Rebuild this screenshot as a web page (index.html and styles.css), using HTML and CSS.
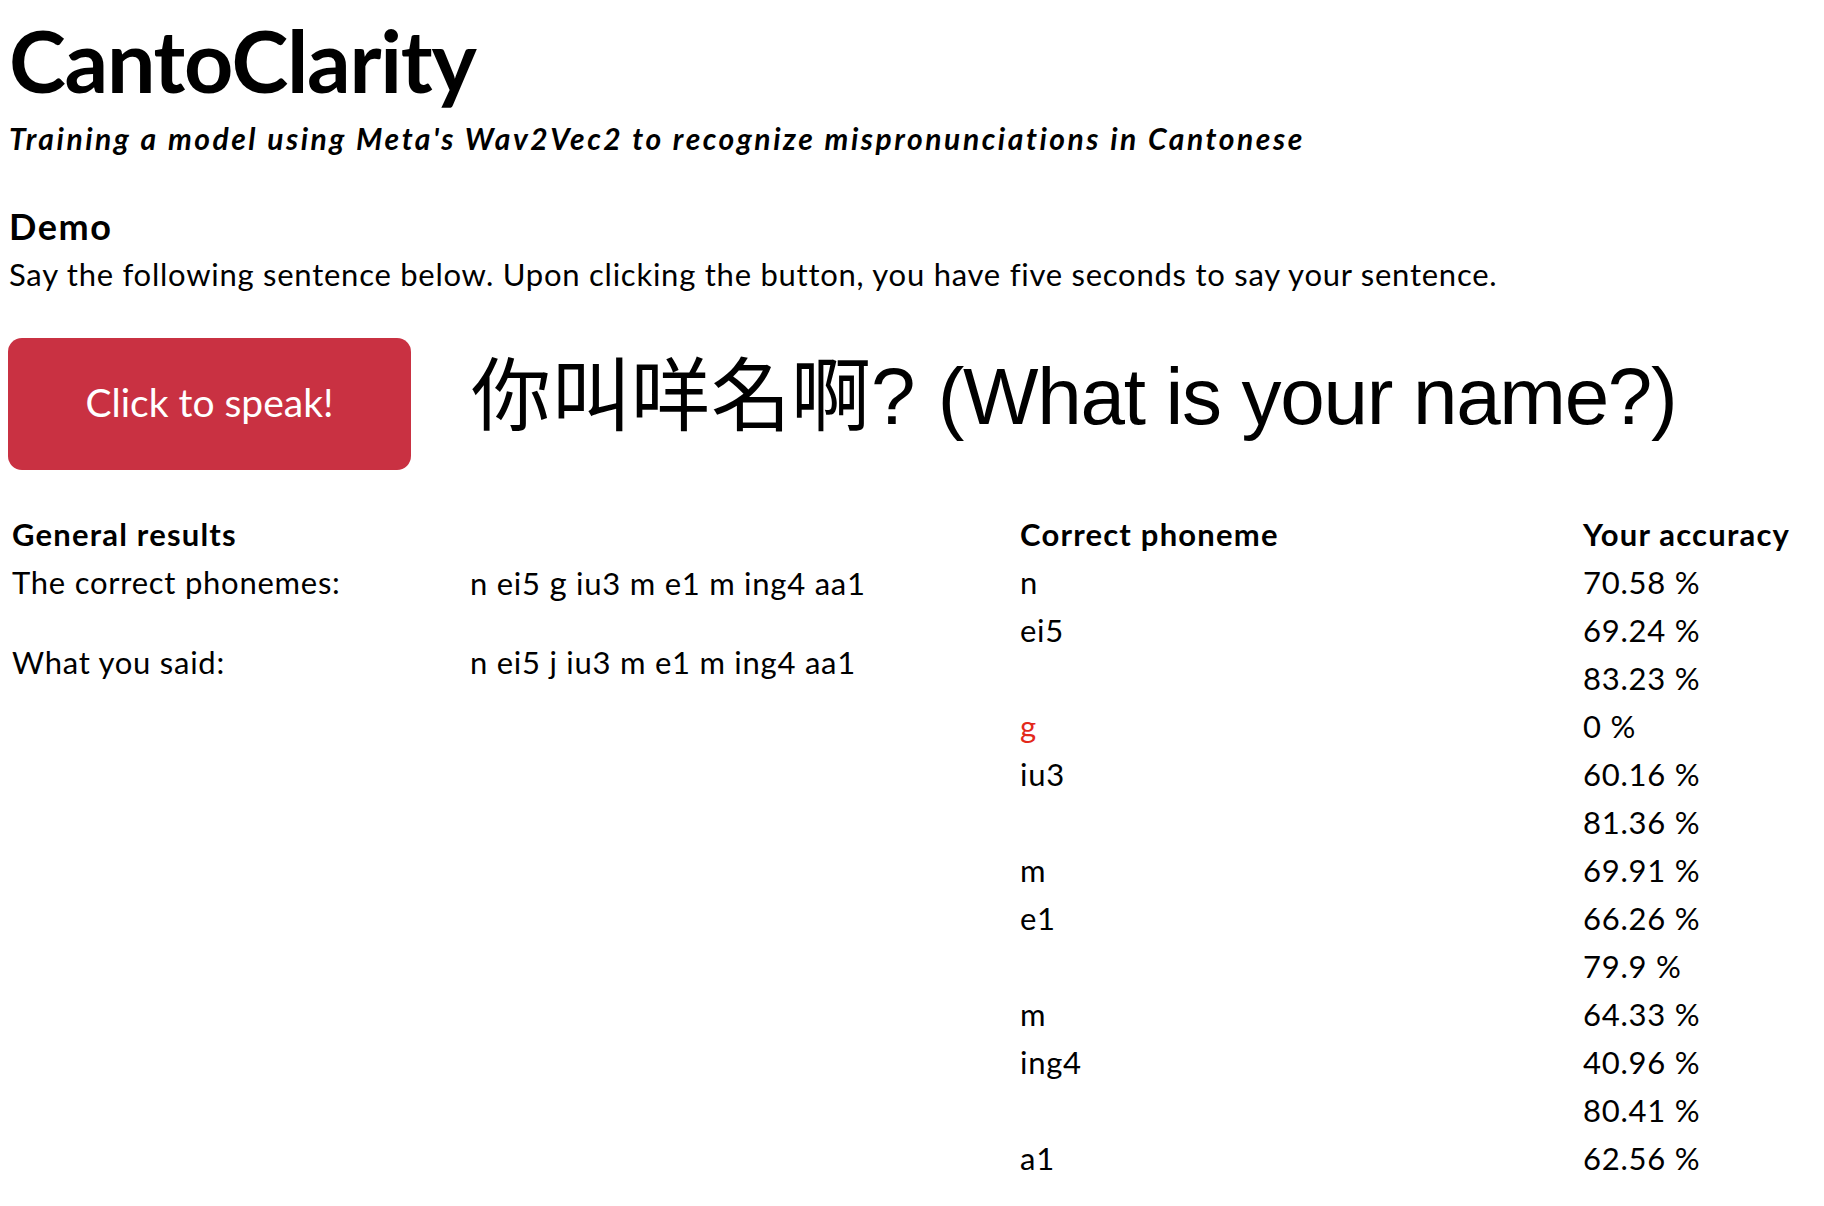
FILE: index.html
```html
<!DOCTYPE html>
<html lang="en">
<head>
<meta charset="utf-8">
<title>CantoClarity</title>
<link rel="stylesheet" href="styles.css">
</head>
<body>
<header class="masthead">
  <h1 class="title">CantoClarity</h1>
  <p class="subtitle">Training a model using Meta's Wav2Vec2 to recognize mispronunciations in Cantonese</p>
</header>

<section class="demo">
  <h2 class="section-title">Demo</h2>
  <p class="lead">Say the following sentence below. Upon clicking the button, you have five seconds to say your sentence.</p>

  <div class="speak-row">
    <button class="speak-btn" type="button">Click to speak!</button>
    <div class="sentence">你叫咩名啊? <span class="en">(What is your name?)</span></div>
  </div>
</section>

<section class="results">
  <div class="general">
    <div class="th">General results</div>
    <div class="th"></div>
    <div class="td">The correct phonemes:</div>
    <div class="td">n ei5 <span class="hl">g</span> iu3 m e1 m ing4 aa1</div>
    <div class="td">What you said:</div>
    <div class="td">n ei5 j iu3 m e1 m ing4 aa1</div>
  </div>

  <div class="phonemes">
    <div class="th">Correct phoneme</div>
    <div class="th">Your accuracy</div>
    <div class="td">n</div><div class="td">70.58 %</div>
    <div class="td">ei5</div><div class="td">69.24 %</div>
    <div class="td"></div><div class="td">83.23 %</div>
    <div class="td wrong">g</div><div class="td">0 %</div>
    <div class="td">iu3</div><div class="td">60.16 %</div>
    <div class="td"></div><div class="td">81.36 %</div>
    <div class="td">m</div><div class="td">69.91 %</div>
    <div class="td">e1</div><div class="td">66.26 %</div>
    <div class="td"></div><div class="td">79.9 %</div>
    <div class="td">m</div><div class="td">64.33 %</div>
    <div class="td">ing4</div><div class="td">40.96 %</div>
    <div class="td"></div><div class="td">80.41 %</div>
    <div class="td">a1</div><div class="td">62.56 %</div>
  </div>
</section>
</body>
</html>
```

FILE: styles.css
```css
html, body {
  background: #ffffff;
}

body {
  margin: 0;
  padding: 8px 8px 0 9px;
  font-family: "Lato", "Noto Sans", sans-serif;
  color: #000000;
}

.masthead {
  display: flex;
  flex-direction: column;
}

.title {
  margin: 0;
  font-size: 86px;
  line-height: 104px;
  font-weight: 700;
  letter-spacing: -1.3px;
}

.subtitle {
  margin: 8px 0 0;
  font-size: 30px;
  line-height: 36px;
  font-weight: 700;
  font-style: italic;
  letter-spacing: 2.55px;
}

.demo {
  margin-top: 50px;
}

.section-title {
  margin: 0;
  font-size: 36px;
  line-height: 40px;
  font-weight: 700;
  letter-spacing: 1.6px;
}

.lead {
  margin: 8px 0 0;
  font-size: 31px;
  line-height: 40px;
  font-weight: 400;
  letter-spacing: 0.75px;
}

.speak-row {
  display: flex;
  align-items: center;
  gap: 60px;
  margin-top: 44px;
}

.speak-btn {
  flex: none;
  width: 403px;
  height: 132px;
  margin-left: -1px;
  border: none;
  border-radius: 14px;
  background: #c93142;
  color: #ffffff;
  font-family: "Lato", "Noto Sans", sans-serif;
  font-size: 39px;
  font-weight: 400;
  letter-spacing: 0;
  padding: 0 0 4px;
  cursor: pointer;
}

.sentence {
  font-family: "Liberation Sans", "Noto Sans CJK TC", sans-serif;
  font-size: 80px;
  line-height: 100px;
  margin-top: -14px;
}

.en {
  letter-spacing: -1.3px;
}

.results {
  display: flex;
  align-items: flex-start;
  margin-top: 40px;
  padding-left: 3px;
}

.general {
  display: grid;
  grid-template-columns: 458px 550px;
  grid-auto-rows: 48px;
}

.general .td:nth-child(n+5) {
  margin-top: 32px;
}

.phonemes {
  display: grid;
  grid-template-columns: 563px auto;
  grid-auto-rows: 48px;
}

.th, .td {
  font-size: 31px;
  line-height: 48px;
  white-space: nowrap;
}

.th {
  font-weight: 700;
  letter-spacing: 1.2px;
}

.td {
  font-weight: 400;
  letter-spacing: 0.75px;
}

.hl {
  font-size: 33px;
}

.wrong {
  color: #e3281b;
}
```
